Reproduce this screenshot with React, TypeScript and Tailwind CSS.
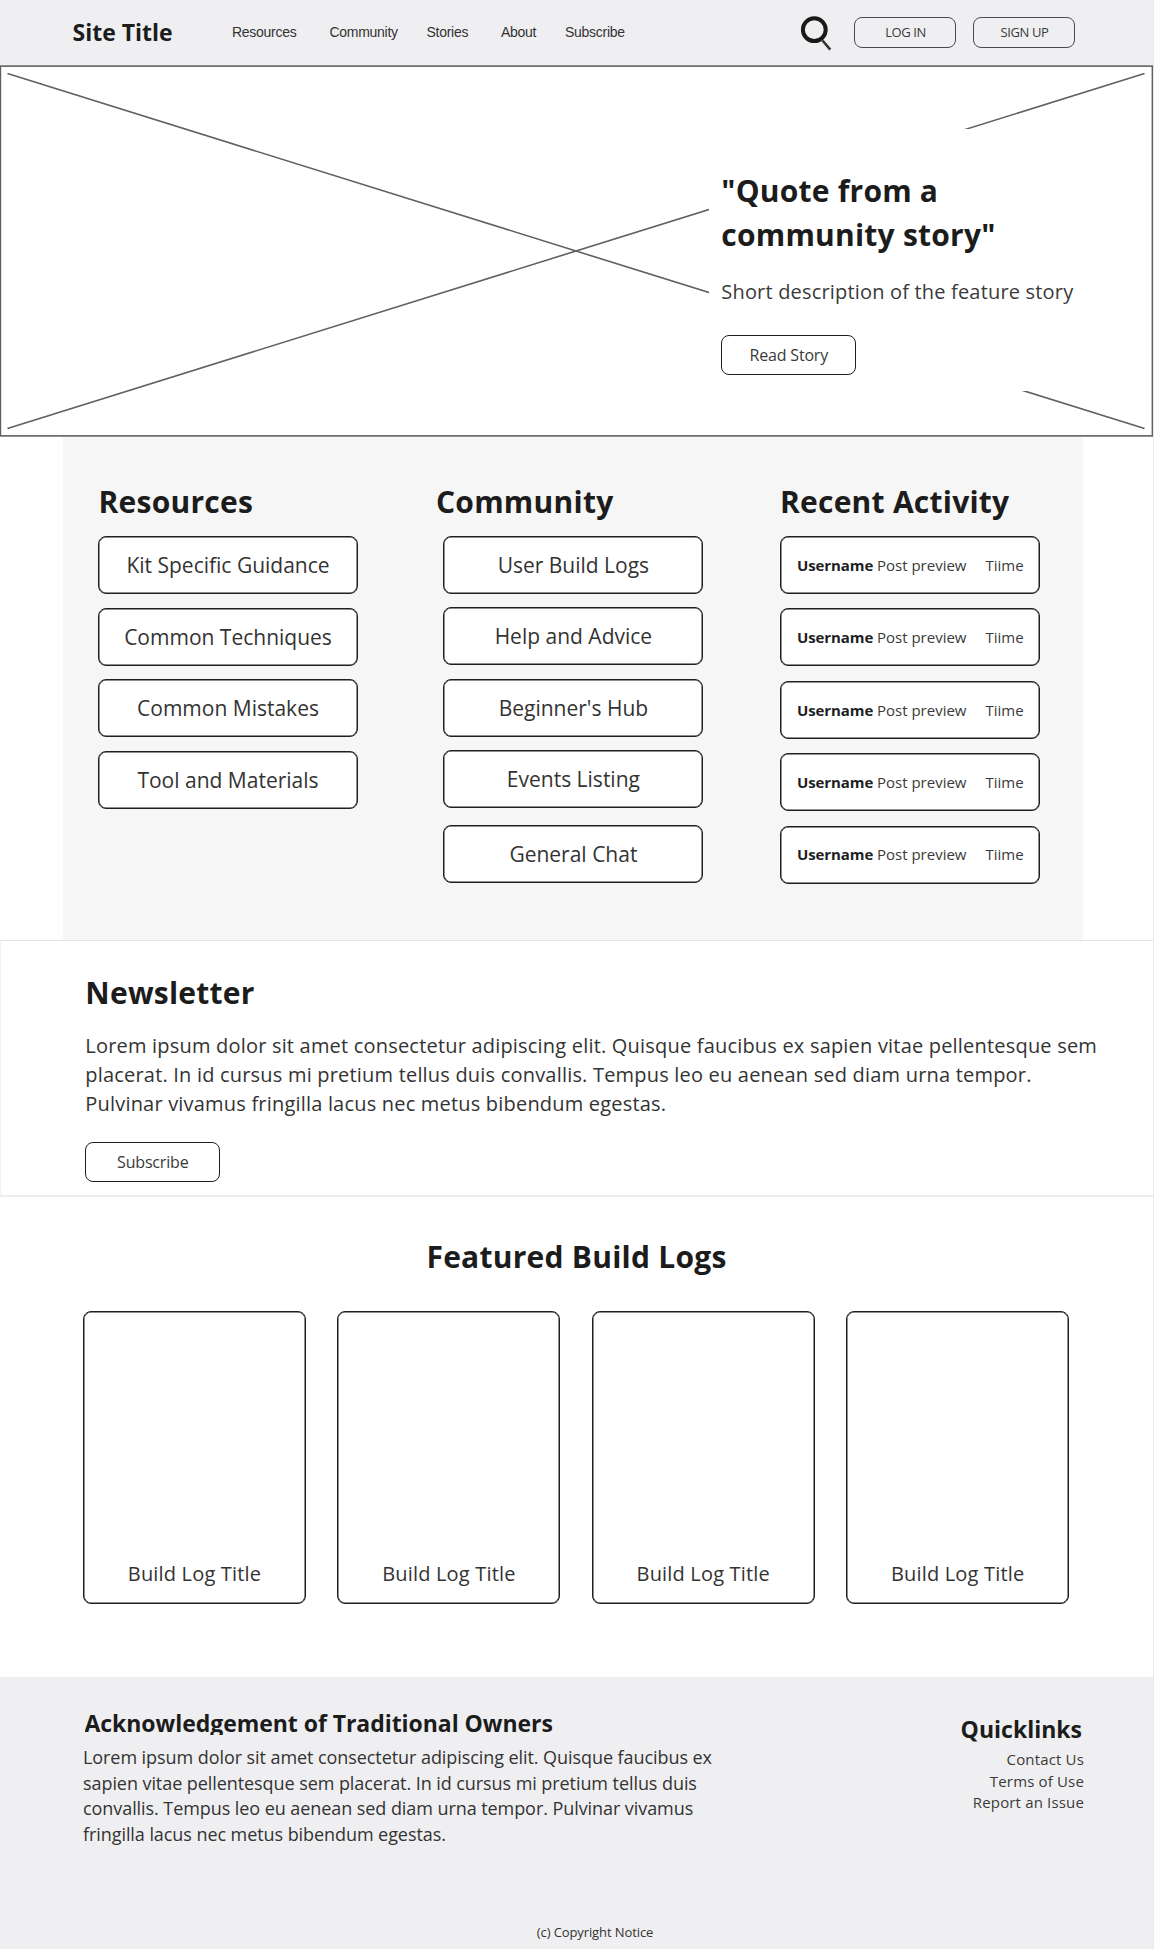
import React from "react";

const navItems = [
  { label: "Resources", width: "w-[97.5px]" },
  { label: "Community", width: "w-[97px]" },
  { label: "Stories", width: "w-[74.5px]" },
  { label: "About", width: "w-[64px]" },
  { label: "Subscribe", width: "w-auto" },
];
const resources = ["Kit Specific Guidance", "Common Techniques", "Common Mistakes", "Tool and Materials"];
const community = ["User Build Logs", "Help and Advice", "Beginner's Hub", "Events Listing"];
const outline = "border border-[#1f1f1f] shadow-[inset_0_0_0_0.5px_#1f1f1f] bg-white";

function SearchIcon() {
  return (
    <svg width="36" height="44" viewBox="0 0 36 44" className="shrink-0">
      <circle cx="15.3" cy="18.7" r="11.4" fill="none" stroke="#1a1a1a" strokeWidth="4" />
      <path d="M23.5 29.5 L31.3 38.6" stroke="#333" strokeWidth="2.6" />
    </svg>
  );
}

function HeaderButton({ children }: { children: React.ReactNode }) {
  return (
    <button className="h-[31px] w-[102px] rounded-lg border border-[#4a4a4c] pl-[1px] text-[13px] leading-none tracking-[-0.4px] text-[#3a3a3a]">
      {children}
    </button>
  );
}

function ActionButton({ children }: { children: React.ReactNode }) {
  return (
    <button className="flex h-[40px] w-[135px] items-center justify-center rounded-lg border border-[#1f1f1f] bg-white text-[16px] tracking-[-0.18px] text-[#3a3a3a]">
      {children}
    </button>
  );
}

function LinkCard({ children }: { children: React.ReactNode }) {
  return (
    <a className={`flex h-[58px] w-[260px] items-center justify-center rounded-lg pt-[1.5px] text-[21px] text-[#333] ${outline}`}>
      {children}
    </a>
  );
}

function ActivityCard() {
  return (
    <div className={`flex h-[58px] w-[260px] items-center rounded-lg pl-4 text-[15px] text-[#3a3a3a] ${outline}`}>
      <span className="w-[80px] font-bold tracking-[-0.1px] text-[#1f1f1f]">Username</span>
      <span className="w-[108.5px]">Post preview</span>
      <span>Tiime</span>
    </div>
  );
}

function Heading({ children, className = "" }: { children: React.ReactNode; className?: string }) {
  return (
    <h2 className={`text-[30px] leading-[40px] font-bold tracking-[0.24px] text-[#1c1c1c] ${className}`}>{children}</h2>
  );
}

export default function App() {
  return (
    <div className="h-[1949px] w-[1154px] overflow-hidden border-r border-[#e9e9ee] bg-white font-['Open_Sans',sans-serif] text-[#333]">
      <header className="flex h-[65px] items-center bg-[#efeff1] pl-[72.5px]">
        <div className="w-[159.5px] text-[23px] font-bold text-[#1c1c1c]">Site Title</div>
        <nav className="flex pb-[1px] font-['Liberation_Sans',sans-serif] text-[14px] tracking-[-0.28px] text-[#333]">
          {navItems.map((n) => (
            <a key={n.label} className={n.width}>
              {n.label}
            </a>
          ))}
        </nav>
        <div className="mr-[78px] ml-auto flex items-center">
          <SearchIcon />
          <div className="ml-[19px] flex gap-[17px]">
            <HeaderButton>LOG IN</HeaderButton>
            <HeaderButton>SIGN UP</HeaderButton>
          </div>
        </div>
      </header>

      <section className="relative h-[372px] pt-[63.5px] pl-[709px]">
        <svg className="absolute inset-0" width="1153" height="372" viewBox="0 0 1153 372" fill="none" stroke="#606060" strokeWidth="1.6">
          <rect x="0.4" y="1.1" width="1152" height="369.8" />
          <path d="M7.5 8.5 L1144.5 363.5 M1144.5 8.5 L7.5 363.5" />
        </svg>
        <div className="relative h-[262.5px] w-[392px] bg-white pt-[40px] pl-[12.3px]">
          <h1 className="text-[30px] leading-[44px] font-bold tracking-[0.22px] text-[#1c1c1c]">
            "Quote from a
            <br />
            community story"
          </h1>
          <p className="mt-[21px] text-[20px] leading-7 tracking-[0.18px] whitespace-nowrap text-[#3a3a3a]">
            Short description of the feature story
          </p>
          <div className="mt-[29px]">
            <ActionButton>Read Story</ActionButton>
          </div>
        </div>
      </section>

      <section className="ml-[63px] flex h-[503px] w-[1020px] bg-[#f6f6f6] pt-[45px] pl-[35px]">
        <div className="w-[345.4px]">
          <Heading className="pl-[0.5px]">Resources</Heading>
          <div className="mt-[14px] flex flex-col gap-[13.5px]">
            {resources.map((r) => (
              <LinkCard key={r}>{r}</LinkCard>
            ))}
          </div>
        </div>
        <div className="w-[336.6px]">
          <Heading className="-ml-[7.4px] tracking-[0.1px]">Community</Heading>
          <div className="mt-[14px] flex flex-col gap-[13.4px]">
            {community.map((c) => (
              <LinkCard key={c}>{c}</LinkCard>
            ))}
          </div>
          <div className="mt-[17.3px]">
            <LinkCard>General Chat</LinkCard>
          </div>
        </div>
        <div>
          <Heading>Recent Activity</Heading>
          <div className="mt-[14px] flex flex-col gap-[14.4px]">
            {[1, 2, 3, 4, 5].map((n) => (
              <ActivityCard key={n} />
            ))}
          </div>
        </div>
      </section>

      <section className="h-[257px] border-t border-b-2 border-l border-t-[#e2e2e4] border-b-[#ededef] border-l-[#f0f0f2] pt-[32px] pl-[84.3px]">
        <Heading>Newsletter</Heading>
        <p className="mt-[18px] text-[20px] leading-[29px] tracking-[0.195px] whitespace-nowrap">
          Lorem ipsum dolor sit amet consectetur adipiscing elit. Quisque faucibus ex sapien vitae pellentesque sem
          <br />
          placerat. In id cursus mi pretium tellus duis convallis. Tempus leo eu aenean sed diam urna tempor.
          <br />
          Pulvinar vivamus fringilla lacus nec metus bibendum egestas.
        </p>
        <div className="mt-[24px]">
          <ActionButton>Subscribe</ActionButton>
        </div>
      </section>

      <section className="h-[480px] pt-[39.5px]">
        <Heading className="text-center">Featured Build Logs</Heading>
        <div className="mt-[34.5px] flex gap-[31.4px] pl-[83px]">
          {[1, 2, 3, 4].map((n) => (
            <article
              key={n}
              className={`flex h-[293px] w-[223px] flex-col justify-end rounded-lg pb-[15px] text-center text-[20px] leading-7 tracking-[0.18px] ${outline}`}
            >
              Build Log Title
            </article>
          ))}
        </div>
      </section>

      <footer className="h-[272px] bg-[#efeff1]">
        <div className="flex h-[246px] justify-between">
          <div className="pt-[30px] pl-[83px]">
            <h3 className="ml-[1.5px] h-[28px] overflow-hidden text-[23px] leading-[32px] font-bold tracking-[-0.05px] text-[#1c1c1c]">
              Acknowledgement of Traditional Owners
            </h3>
            <p className="mt-[9.8px] text-[18px] leading-[25.7px] tracking-[-0.07px] whitespace-nowrap">
              Lorem ipsum dolor sit amet consectetur adipiscing elit. Quisque faucibus ex
              <br />
              sapien vitae pellentesque sem placerat. In id cursus mi pretium tellus duis
              <br />
              convallis. Tempus leo eu aenean sed diam urna tempor. Pulvinar vivamus
              <br />
              fringilla lacus nec metus bibendum egestas.
            </p>
          </div>
          <div className="flex flex-col pt-[36px] pr-[69px] text-right text-[15px] leading-[21.7px] tracking-[0.16px] text-[#3a3a3a]">
            <h3 className="mr-[2px] mb-[3.8px] text-[23px] leading-[32px] font-bold tracking-normal text-[#1c1c1c]">
              Quicklinks
            </h3>
            <a>Contact Us</a>
            <a>Terms of Use</a>
            <a>Report an Issue</a>
          </div>
        </div>
        <p className="pl-[37px] text-center text-[13px] leading-[18px] tracking-[-0.1px]">(c) Copyright Notice</p>
      </footer>
    </div>
  );
}
